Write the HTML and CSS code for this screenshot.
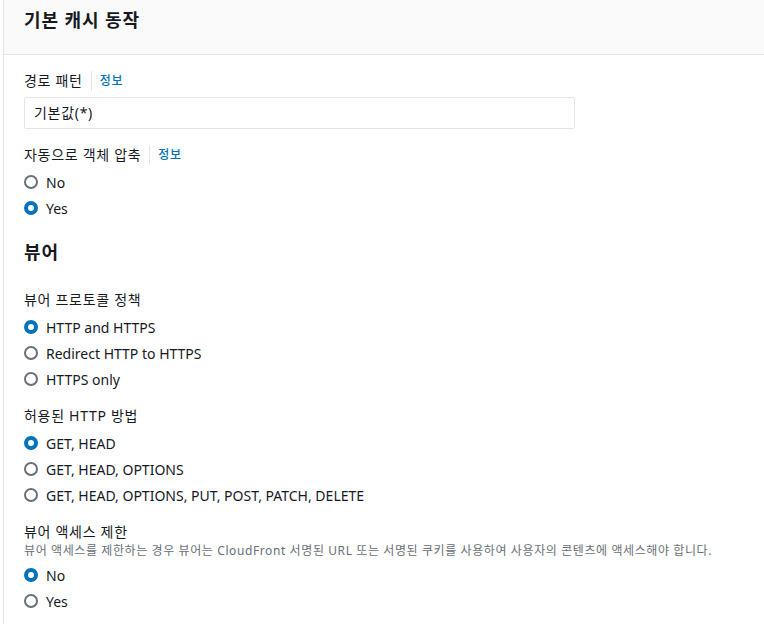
FILE: index.html
```html
<!DOCTYPE html>
<html lang="ko">
<head>
  <meta charset="UTF-8">
  <title>기본 캐시 동작</title>
  <link rel="stylesheet" href="styles.css">
</head>
<body>
  <div class="painel">
    <div class="cabecalho">
      <h2>기본 캐시 동작</h2>
    </div>

    <div class="conteudo">
      <div class="campo">
        <div class="rotulo">경로 패턴 <span class="info">정보</span></div>
        <div class="entrada">기본값(*)</div>
      </div>

      <div class="campo espaco-entrada">
        <div class="rotulo">자동으로 객체 압축 <span class="info">정보</span></div>
        <div class="opcoes">
          <label class="opcao"><span class="radio"></span>No</label>
          <label class="opcao"><span class="radio marcado"></span>Yes</label>
        </div>
      </div>

      <h3>뷰어</h3>

      <div class="campo primeiro">
        <div class="rotulo">뷰어 프로토콜 정책</div>
        <div class="opcoes">
          <label class="opcao"><span class="radio marcado"></span>HTTP and HTTPS</label>
          <label class="opcao"><span class="radio"></span>Redirect HTTP to HTTPS</label>
          <label class="opcao"><span class="radio"></span>HTTPS only</label>
        </div>
      </div>

      <div class="campo">
        <div class="rotulo">허용된 HTTP 방법</div>
        <div class="opcoes">
          <label class="opcao"><span class="radio marcado"></span>GET, HEAD</label>
          <label class="opcao"><span class="radio"></span>GET, HEAD, OPTIONS</label>
          <label class="opcao"><span class="radio"></span>GET, HEAD, OPTIONS, PUT, POST, PATCH, DELETE</label>
        </div>
      </div>

      <div class="campo">
        <div class="rotulo">뷰어 액세스 제한</div>
        <div class="descricao">뷰어 액세스를 제한하는 경우 뷰어는 CloudFront 서명된 URL 또는 서명된 쿠키를 사용하여 사용자의 콘텐츠에 액세스해야 합니다.</div>
        <div class="opcoes">
          <label class="opcao"><span class="radio marcado"></span>No</label>
          <label class="opcao"><span class="radio"></span>Yes</label>
        </div>
      </div>
    </div>
  </div>
</body>
</html>
```

FILE: styles.css
```css
body {
  font-family: 'Noto Sans', 'Noto Sans CJK KR', sans-serif;
  font-size: 14px;
  color: #16191f;
  background: #fff;
  margin: 0;
  padding: 0 0 0 3px;
}

.painel {
  border-left: 1px solid #e4e6e6;
  min-height: 624px;
}

.cabecalho {
  background: #fafafa;
  border-bottom: 1px solid #e4e6e6;
  height: 55px;
  padding: 8px 20px 0;
  box-sizing: border-box;
}

/* texto coreano fica mais estreito que o original */
h2, h3, .rotulo, .entrada, .descricao {
  letter-spacing: 0.05em;
}

h2 {
  margin: 0;
  font-size: 18px;
  line-height: 24px;
  font-weight: 700;
}

.conteudo {
  padding: 15px 20px 0;
}

h3 {
  margin: 17px 0 0;
  font-size: 18px;
  line-height: 28px;
  font-weight: 700;
}

.campo {
  margin-top: 13px;
}

.campo:first-child {
  margin-top: 0;
}

.espaco-entrada {
  margin-top: 15px;
}

.primeiro {
  margin-top: 23px;
}

.rotulo {
  line-height: 22px;
  display: flex;
  align-items: center;
}

.info {
  color: #0073bb;
  font-size: 12px;
  font-weight: 500;
  margin-left: 8px;
  padding-left: 8px;
  border-left: 1px solid #e4e6e6;
  line-height: 20px;
}

.entrada {
  margin-top: 5px;
  width: 551px;
  height: 32px;
  box-sizing: border-box;
  border: 1px solid #e4e6e6;
  border-radius: 2px;
  padding: 0 9px;
  line-height: 30px;
}

.descricao {
  font-size: 12px;
  line-height: 16px;
  color: #687078;
}

.opcoes {
  margin-top: 3px;
}

.opcao {
  display: flex;
  align-items: center;
  height: 26px;
}

.radio {
  width: 14px;
  height: 14px;
  box-sizing: border-box;
  border: 2px solid #687078;
  border-radius: 50%;
  margin-right: 8px;
  flex-shrink: 0;
}

.radio.marcado {
  border: 4px solid #0073bb;
  background: #fff;
}
```
